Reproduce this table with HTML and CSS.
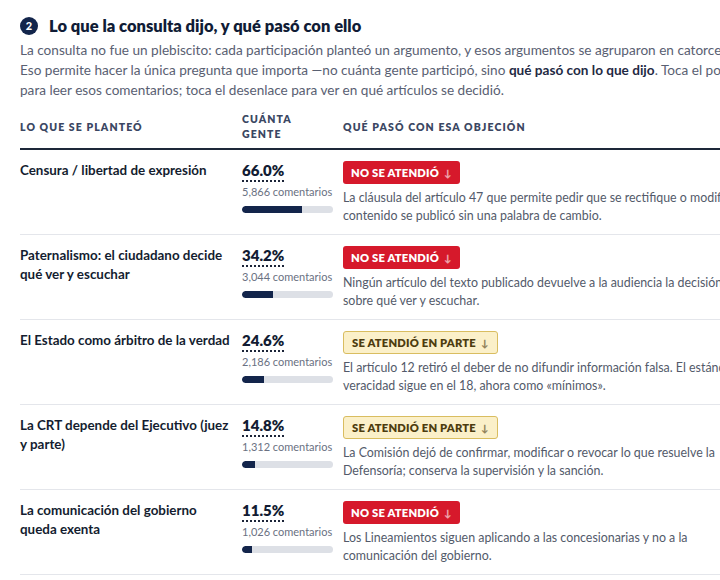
FILE: index.html
```html
<!DOCTYPE html>
<html lang="es">
<head>
<meta charset="utf-8">
<title>Lo que la consulta dijo</title>
<link rel="stylesheet" href="styles.css">
</head>
<body>
<section class="section">
  <h2 class="title"><span class="num">2</span>Lo que la consulta dijo, y qué pasó con ello</h2>
  <p class="intro">La consulta no fue un plebiscito: cada participación planteó un argumento, y esos argumentos se agruparon en catorce familias. Eso permite hacer la única pregunta que importa —no cuánta gente participó, sino <strong>qué pasó con lo que dijo</strong>. Toca el porcentaje para leer esos comentarios; toca el desenlace para ver en qué artículos se decidió.</p>

  <div class="table">
    <div class="thead">
      <div class="th">Lo que se planteó</div>
      <div class="th">Cuánta<br>gente</div>
      <div class="th">Qué pasó con esa objeción</div>
    </div>

    <div class="row">
      <div class="topic">Censura / libertad de expresión</div>
      <div class="share">
        <span class="pct">66.0%</span>
        <span class="count">5,866 comentarios</span>
        <span class="bar"><span class="fill" style="width:66%"></span></span>
      </div>
      <div class="outcome">
        <span class="badge no">No se atendió <span class="arr">↓</span></span>
        <p class="desc">La cláusula del artículo 47 que permite pedir que se rectifique o modifique contenido se publicó sin una palabra de cambio.</p>
      </div>
    </div>

    <div class="row">
      <div class="topic">Paternalismo: el ciudadano decide qué ver y escuchar</div>
      <div class="share">
        <span class="pct">34.2%</span>
        <span class="count">3,044 comentarios</span>
        <span class="bar"><span class="fill" style="width:34.2%"></span></span>
      </div>
      <div class="outcome">
        <span class="badge no">No se atendió <span class="arr">↓</span></span>
        <p class="desc">Ningún artículo del texto publicado devuelve a la audiencia la decisión sobre qué ver y escuchar.</p>
      </div>
    </div>

    <div class="row">
      <div class="topic">El Estado como árbitro de la verdad</div>
      <div class="share">
        <span class="pct">24.6%</span>
        <span class="count">2,186 comentarios</span>
        <span class="bar"><span class="fill" style="width:24.6%"></span></span>
      </div>
      <div class="outcome">
        <span class="badge part">Se atendió en parte <span class="arr">↓</span></span>
        <p class="desc">El artículo 12 retiró el deber de no difundir información falsa. El estándar de veracidad sigue en el 18, ahora como «mínimos».</p>
      </div>
    </div>

    <div class="row">
      <div class="topic">La CRT depende del Ejecutivo (juez y parte)</div>
      <div class="share">
        <span class="pct">14.8%</span>
        <span class="count">1,312 comentarios</span>
        <span class="bar"><span class="fill" style="width:14.8%"></span></span>
      </div>
      <div class="outcome">
        <span class="badge part">Se atendió en parte <span class="arr">↓</span></span>
        <p class="desc">La Comisión dejó de confirmar, modificar o revocar lo que resuelve la Defensoría; conserva la supervisión y la sanción.</p>
      </div>
    </div>

    <div class="row">
      <div class="topic">La comunicación del gobierno queda exenta</div>
      <div class="share">
        <span class="pct">11.5%</span>
        <span class="count">1,026 comentarios</span>
        <span class="bar"><span class="fill" style="width:11.5%"></span></span>
      </div>
      <div class="outcome">
        <span class="badge no">No se atendió <span class="arr">↓</span></span>
        <p class="desc">Los Lineamientos siguen aplicando a las concesionarias y no a la comunicación del gobierno.</p>
      </div>
    </div>
  </div>
</section>
</body>
</html>
```
FILE: styles.css
```css
html, body {
  margin: 0;
  padding: 0;
  background: #ffffff;
  overflow: hidden;
}
body {
  font-family: Lato, "Open Sans", "Liberation Sans", sans-serif;
  color: #1b2438;
}
.section {
  width: 800px;
  padding: 16px 0 0 20px;
}
.title {
  display: flex;
  align-items: center;
  gap: 11px;
  margin: 0;
  font-size: 16.5px;
  font-weight: 800;
  color: #101c36;
  line-height: 20px;
}
.num {
  display: inline-flex;
  align-items: center;
  justify-content: center;
  width: 18px;
  height: 18px;
  border-radius: 50%;
  background: #13254b;
  color: #fff;
  font-size: 11px;
  font-weight: 900;
}
.intro {
  width: 765px;
  margin: 4px 0 0;
  font-size: 13.6px;
  line-height: 20px;
  color: #596072;
}
.intro strong {
  color: #1f2a44;
  font-weight: 700;
}
.table {
  width: 733px;
  margin-top: 12px;
}
.thead, .row {
  display: grid;
  grid-template-columns: 214px 93px 1fr;
  column-gap: 8px;
}
.thead {
  align-items: center;
  padding-bottom: 6px;
  border-bottom: 2px solid #1d2739;
}
.th {
  font-size: 10.5px;
  font-weight: 800;
  letter-spacing: 1.1px;
  text-transform: uppercase;
  line-height: 15px;
  color: #3b4763;
}
.row {
  padding: 11px 0 9px;
  border-bottom: 1px solid #e4e6eb;
}
.topic {
  font-size: 13.4px;
  font-weight: 700;
  line-height: 19px;
  color: #141d30;
}
.share {
  display: flex;
  flex-direction: column;
  align-items: flex-start;
}
.pct {
  font-size: 15px;
  font-weight: 800;
  line-height: 19px;
  color: #121c33;
  border-bottom: 2px dotted #1b2438;
}
.count {
  font-size: 11px;
  line-height: 15px;
  color: #6a7182;
  margin-top: 2px;
  white-space: nowrap;
}
.bar {
  display: block;
  width: 91px;
  height: 7px;
  margin-top: 7px;
  border-radius: 4px;
  background: #dde0e6;
  overflow: hidden;
}
.fill {
  display: block;
  height: 100%;
  background: #13254b;
  border-radius: 4px 0 0 4px;
}
.outcome {
  display: flex;
  flex-direction: column;
  align-items: flex-start;
}
.badge {
  display: inline-flex;
  align-items: center;
  gap: 5px;
  height: 23px;
  padding: 0 8px;
  border-radius: 3px;
  font-size: 11.2px;
  font-weight: 800;
  letter-spacing: 0.2px;
  text-transform: uppercase;
  box-sizing: border-box;
}
.badge.no {
  background: #d6192b;
  color: #ffffff;
}
.badge.part {
  background: #fbf0c9;
  color: #4d3c0f;
  border: 1px solid #d9bd60;
}
.arr {
  font-size: 10px;
  opacity: 0.6;
}
.desc {
  margin: 5px 0 0;
  font-size: 12.4px;
  line-height: 18px;
  color: #535a6a;
}
```
